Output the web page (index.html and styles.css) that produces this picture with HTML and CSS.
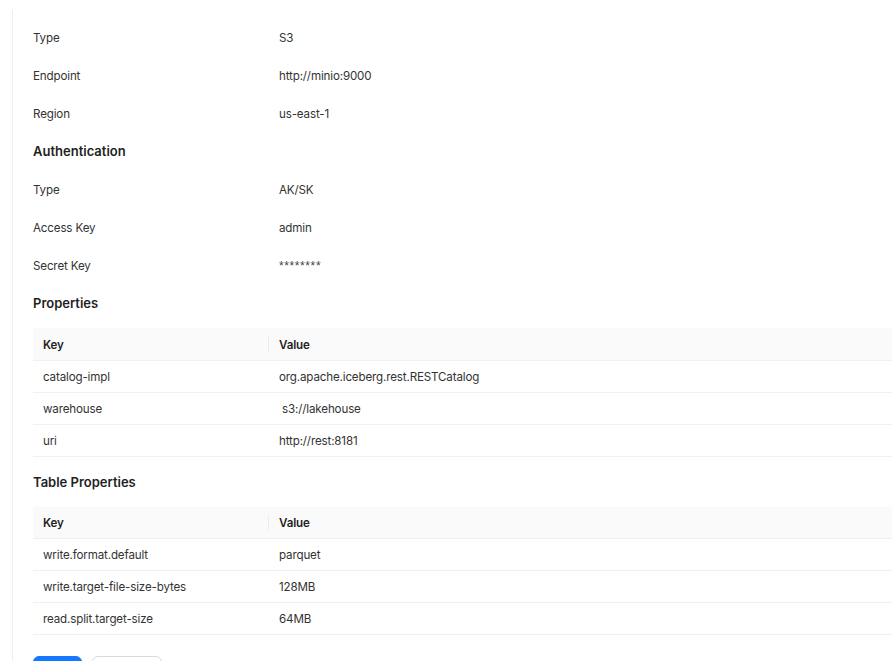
FILE: index.html
```html
<!DOCTYPE html>
<html lang="en">
<head>
<meta charset="utf-8">
<title>Catalog details</title>
<link rel="stylesheet" href="styles.css">
</head>
<body>
<div class="frame">
  <div class="panel">
    <div class="desc">
      <div class="row"><span class="label">Type</span><span class="value">S3</span></div>
      <div class="row"><span class="label">Endpoint</span><span class="value">http://minio:9000</span></div>
      <div class="row"><span class="label">Region</span><span class="value">us-east-1</span></div>
      <h3 class="section">Authentication</h3>
      <div class="row"><span class="label">Type</span><span class="value">AK/SK</span></div>
      <div class="row"><span class="label">Access Key</span><span class="value">admin</span></div>
      <div class="row"><span class="label">Secret Key</span><span class="value secret">********</span></div>
      <h3 class="section">Properties</h3>
    </div>
    <table class="kv">
      <thead>
        <tr><th>Key</th><th class="sep">Value</th></tr>
      </thead>
      <tbody>
        <tr><td>catalog-impl</td><td>org.apache.iceberg.rest.RESTCatalog</td></tr>
        <tr><td>warehouse</td><td> s3://lakehouse</td></tr>
        <tr><td>uri</td><td>http://rest:8181</td></tr>
      </tbody>
    </table>
    <h3 class="section">Table Properties</h3>
    <table class="kv">
      <thead>
        <tr><th>Key</th><th class="sep">Value</th></tr>
      </thead>
      <tbody>
        <tr><td>write.format.default</td><td>parquet</td></tr>
        <tr><td>write.target-file-size-bytes</td><td>128MB</td></tr>
        <tr><td>read.split.target-size</td><td>64MB</td></tr>
      </tbody>
    </table>
    <div class="actions">
      <button class="btn primary">Save</button>
      <button class="btn">Cancel</button>
    </div>
  </div>
</div>
</body>
</html>
```

FILE: styles.css
```css
html, body {
  margin: 0;
  padding: 0;
  background: #ffffff;
}

body {
  font-family: Inter, "Liberation Sans", Arial, sans-serif;
  font-size: 11.6px;
  letter-spacing: -0.15px;
  color: #333333;
  overflow: hidden;
}

.frame {
  padding: 10px 0 9px 12px;
}

/* detail panel, clipped at the bottom of the viewport */
.panel {
  height: 651px;
  border-left: 1px solid #eeeeee;
  padding: 8px 0 0 20px;
  box-sizing: border-box;
  overflow: hidden;
}

.row {
  display: flex;
  height: 38px;
  padding-top: 1px;
  box-sizing: border-box;
  align-items: center;
}

.label {
  width: 246px;
  flex: none;
}

.value {
  white-space: pre;
}

.value.secret {
  font-family: "Liberation Sans", Arial, sans-serif;
  font-size: 12px;
  letter-spacing: 0.6px;
  color: #444444;
}

.section {
  margin: 0;
  height: 38px;
  line-height: 38px;
  font-size: 13px;
  letter-spacing: 0;
  font-weight: 600;
  color: #1f1f1f;
}

/* key / value tables */
.kv {
  width: 900px;
  border-collapse: collapse;
  margin: 6px 0;
  table-layout: fixed;
}

.kv th, .kv td {
  height: 32px;
  padding: 1px 10px 0;
  text-align: left;
  box-sizing: border-box;
  border-bottom: 1px solid #f0f0f0;
  white-space: pre;
}

.kv th {
  padding-top: 2px;
}

.kv th:first-child, .kv td:first-child {
  width: 236px;
}

.kv th {
  background: #fafafa;
  font-weight: 600;
  color: #1f1f1f;
}

.kv th.sep {
  position: relative;
}

.kv th.sep::before {
  content: "";
  position: absolute;
  left: -1px;
  top: 8px;
  height: 16px;
  width: 1px;
  background: #ececec;
}

.actions {
  display: flex;
  gap: 10px;
  padding-top: 15px;
}

.btn {
  height: 32px;
  border-radius: 6px;
  border: 1px solid #d9d9d9;
  background: #ffffff;
  font-family: inherit;
  font-size: 12px;
  color: #333333;
  padding: 0;
  width: 70px;
}

.btn.primary {
  width: 49px;
  background: #1677ff;
  border-color: #1677ff;
  color: #ffffff;
}
```
